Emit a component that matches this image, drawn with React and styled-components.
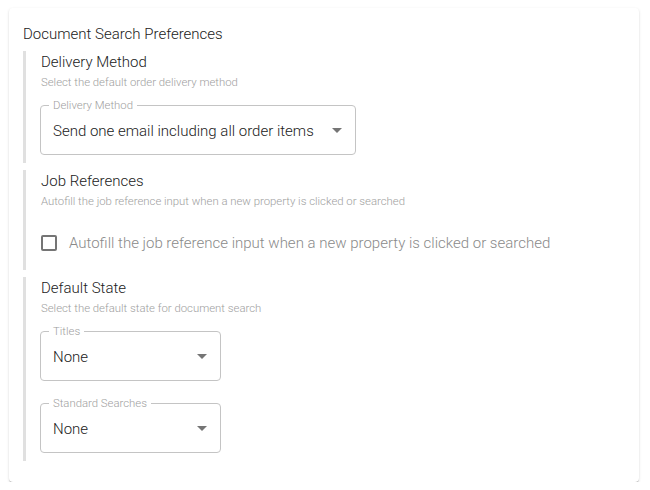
import styled, { createGlobalStyle } from 'styled-components';

const GlobalStyle = createGlobalStyle`
  body {
    margin: 0;
    background: #ffffff;
    font-family: Roboto, "Liberation Sans", sans-serif;
  }
`

const Card = styled.div`
  margin: 8px 11px 0 9px;
  padding: 14px 14px 21px 14px;
  background: #fff;
  border-radius: 4px;
  box-shadow: 0px 2px 1px -1px rgba(0,0,0,0.2), 0px 1px 1px 0px rgba(0,0,0,0.14), 0px 1px 3px 0px rgba(0,0,0,0.12);
`

const CardTitle = styled.div`
  font-size: 15px;
  font-weight: 300;
  line-height: 24px;
  color: #212121;
  margin-bottom: 5px;
`

const Section = styled.div`
  border-left: 3px solid #e0e0e0;
  padding: 2px 0 8px 15px;
  margin-bottom: 7px;

  &:last-child {
    margin-bottom: 0;
  }
`

const Heading = styled.div`
  font-size: 15px;
  font-weight: 300;
  line-height: 18px;
  color: #212121;
`

const Hint = styled.div`
  font-size: 11.35px;
  font-weight: 300;
  line-height: 16px;
  color: #9e9e9e;
  margin-top: 3px;
`

const Field = styled.fieldset`
  position: relative;
  box-sizing: border-box;
  width: ${p => p.width}px;
  height: 50px;
  margin: ${p => p.top}px 0 0 -1px;
  padding: 0 12px;
  border: 1px solid #c4c4c4;
  border-radius: 4px;
  display: flex;
  align-items: center;
  justify-content: space-between;
`

const Legend = styled.legend`
  position: absolute;
  top: -8px;
  left: 8px;
  padding: 0 4px;
  background: #fff;
  font-size: 11.35px;
  font-weight: 300;
  line-height: 14px;
  color: #9e9e9e;
`

const Value = styled.span`
  font-size: 15px;
  font-weight: 300;
  color: #212121;
  margin-top: 1px;
  white-space: nowrap;
`

const Caret = styled.span`
  width: 0;
  height: 0;
  margin-right: 1px;
  border-left: 5px solid transparent;
  border-right: 5px solid transparent;
  border-top: 5px solid #757575;
`

const CheckRow = styled.label`
  display: flex;
  align-items: center;
  gap: 12px;
  margin-top: 25px;
  padding-bottom: 10px;
`

const Box = styled.span`
  box-sizing: border-box;
  width: 16px;
  height: 16px;
  border: 2px solid #757575;
  border-radius: 2px;
`

const CheckText = styled.span`
  font-size: 15px;
  font-weight: 300;
  color: #8a8a8a;
  white-space: nowrap;
`

function Select({ label, value, width, top }) {
  return (
    <Field width={width} top={top}>
      <Legend>{label}</Legend>
      <Value>{value}</Value>
      <Caret />
    </Field>
  )
}

export default function App() {
  return (
    <>
      <GlobalStyle />
      <Card>
        <CardTitle>Document Search Preferences</CardTitle>

        <Section>
          <Heading>Delivery Method</Heading>
          <Hint>Select the default order delivery method</Hint>
          <Select label="Delivery Method" value="Send one email including all order items" width={316} top={15} />
        </Section>

        <Section>
          <Heading>Job References</Heading>
          <Hint>Autofill the job reference input when a new property is clicked or searched</Hint>
          <CheckRow>
            <Box />
            <CheckText>Autofill the job reference input when a new property is clicked or searched</CheckText>
          </CheckRow>
        </Section>

        <Section>
          <Heading>Default State</Heading>
          <Hint>Select the default state for document search</Hint>
          <Select label="Titles" value="None" width={181} top={15} />
          <Select label="Standard Searches" value="None" width={181} top={22} />
        </Section>
      </Card>
    </>
  )
}
